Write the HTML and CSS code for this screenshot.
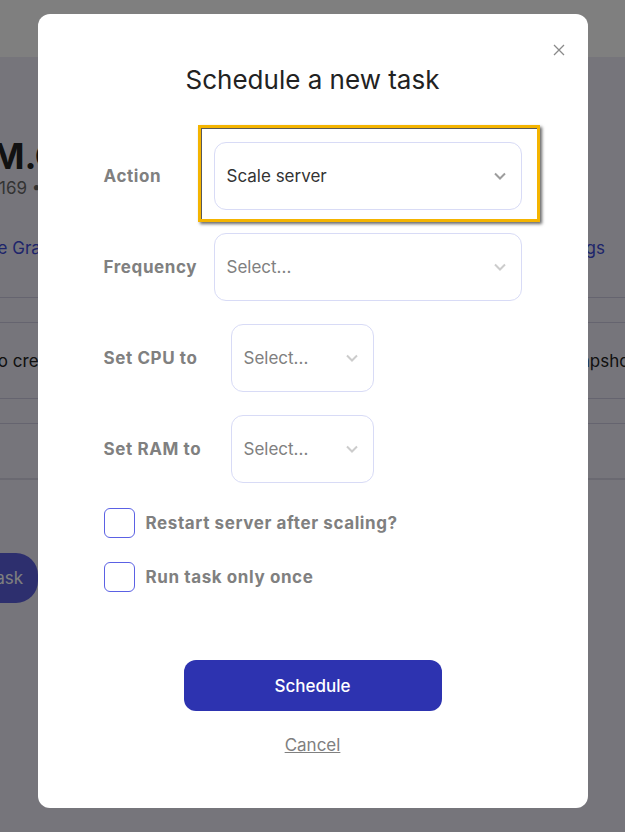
FILE: index.html
```html
<!DOCTYPE html>
<html lang="en">
<head>
    <meta charset="UTF-8">
    <meta name="viewport" content="width=device-width, initial-scale=1.0">
    <title>Schedule a new task</title>
    <link rel="stylesheet" href="styles.css">
</head>
<body>
    <div class="page">
        <header class="topbar"></header>
        <main class="server">
            <h1 class="server-name">VM.Cloud-01</h1>
            <p class="server-meta">192.168.0.169 • Ubuntu 22.04</p>
            <nav class="tabs">
                <a class="tab tab--first">Usage Graphs</a>
                <a class="tab">Settings</a>
            </nav>
            <div class="tasks">
                <div class="tasks-head"></div>
                <div class="tasks-row">
                    <span class="tasks-hint">Click to create a task</span>
                    <span class="tasks-type">Snapshot</span>
                </div>
                <div class="tasks-head"></div>
                <div class="tasks-empty"></div>
            </div>
            <button class="btn-new">New task</button>
        </main>
    </div>

    <div class="overlay">
        <div class="modal">
            <button class="modal-close" aria-label="Close">
                <svg width="12" height="12" viewBox="0 0 12 12">
                    <path d="M1 1 L11 11 M11 1 L1 11" stroke="#8a8a8a" stroke-width="1.3" fill="none"/>
                </svg>
            </button>
            <h2 class="modal-title">Schedule a new task</h2>

            <form class="task-form">
                <div class="field-row">
                    <label class="field-label">Action</label>
                    <div class="select select--filled">
                        <span>Scale server</span>
                        <svg class="chevron" width="12" height="8" viewBox="0 0 12 8">
                            <polyline points="1,1.5 6,6.5 11,1.5" fill="none" stroke="#9d9d9d" stroke-width="2"/>
                        </svg>
                        <div class="highlight"></div>
                    </div>
                </div>
                <div class="field-row">
                    <label class="field-label">Frequency</label>
                    <div class="select">
                        <span>Select...</span>
                        <svg class="chevron" width="12" height="8" viewBox="0 0 12 8">
                            <polyline points="1,1.5 6,6.5 11,1.5" fill="none" stroke="#cccccc" stroke-width="2"/>
                        </svg>
                    </div>
                </div>
                <div class="field-row">
                    <label class="field-label field-label--wide">Set CPU to</label>
                    <div class="select select--small">
                        <span>Select...</span>
                        <svg class="chevron" width="12" height="8" viewBox="0 0 12 8">
                            <polyline points="1,1.5 6,6.5 11,1.5" fill="none" stroke="#cccccc" stroke-width="2"/>
                        </svg>
                    </div>
                </div>
                <div class="field-row">
                    <label class="field-label field-label--wide">Set RAM to</label>
                    <div class="select select--small">
                        <span>Select...</span>
                        <svg class="chevron" width="12" height="8" viewBox="0 0 12 8">
                            <polyline points="1,1.5 6,6.5 11,1.5" fill="none" stroke="#cccccc" stroke-width="2"/>
                        </svg>
                    </div>
                </div>

                <div class="checks">
                    <label class="check"><span class="check-box"></span>Restart server after scaling?</label>
                    <label class="check"><span class="check-box"></span>Run task only once</label>
                </div>

                <button type="button" class="btn-schedule">Schedule</button>
                <a class="cancel">Cancel</a>
            </form>
        </div>
    </div>
</body>
</html>
```

FILE: styles.css
```css
html {
    background-color: #edebf7;
}
body {
    margin: 0;
    font-family: Inter, 'Noto Sans', sans-serif;
    color: #222;
    overflow: hidden;
}

/* page behind the dialog */
.topbar {
    height: 57px;
    background-color: #fff;
}
.server {
    padding-top: 79px;
}
.server-name {
    margin: 0 0 0 -36px;
    font-size: 36px;
    line-height: 40px;
    font-weight: 700;
    white-space: nowrap;
}
.server-meta {
    margin: 0 0 0 -78px;
    font-size: 17px;
    line-height: 24px;
    color: #666;
    white-space: nowrap;
}
.tabs {
    display: flex;
    justify-content: space-between;
    margin: 36px 20px 0 -44px;
    font-size: 17px;
    line-height: 24px;
    color: #3d4ad6;
}
.tasks {
    margin-top: 37px;
}
.tasks-head {
    height: 24px;
    border-top: 1px solid #cbc8de;
    border-bottom: 1px solid #cbc8de;
}
.tasks-row {
    display: flex;
    justify-content: space-between;
    align-items: center;
    height: 75px;
    margin: 0 -10px 0 -52px;
    font-size: 17px;
}
.tasks-empty {
    height: 54px;
    border-bottom: 2px solid #d5d3e2;
}
.btn-new {
    display: block;
    width: 120px;
    height: 50px;
    margin: 73px 0 0 -82px;
    padding: 0 15px 0 0;
    text-align: right;
    font-family: inherit;
    font-size: 17px;
    color: #fff;
    background-color: #5a5fdc;
    border: none;
    border-radius: 22px;
}

/* dialog */
.overlay {
    position: fixed;
    inset: 0;
    display: flex;
    justify-content: center;
    align-items: flex-start;
    padding-top: 14px;
    background-color: rgba(0, 0, 0, 0.5);
}
.modal {
    position: relative;
    box-sizing: border-box;
    width: 550px;
    height: 794px;
    padding: 50px 66px 0;
    background-color: #fff;
    border-radius: 12px;
}
.modal-close {
    position: absolute;
    top: 30px;
    right: 23px;
    width: 12px;
    height: 12px;
    padding: 0;
    border: none;
    background: none;
    display: flex;
}
.modal-title {
    margin: 0;
    text-align: center;
    font-size: 26px;
    line-height: 32px;
    font-weight: 400;
    color: #222;
}
.task-form {
    display: flex;
    flex-direction: column;
    margin-top: 46px;
}
.field-row {
    display: flex;
    align-items: center;
    margin-bottom: 23px;
}
.field-row:nth-child(4) {
    margin-bottom: 0;
}
.field-label {
    width: 110px;
    flex: none;
    font-size: 17px;
    font-weight: 700;
    letter-spacing: 0.6px;
    color: #808080;
}
.field-label--wide {
    width: 127px;
}
.select {
    position: relative;
    flex: 1;
    box-sizing: border-box;
    height: 68px;
    display: flex;
    align-items: center;
    justify-content: space-between;
    padding: 0 15px 0 12px;
    font-size: 17px;
    color: #808080;
    border: 1px solid #d8dbf6;
    border-radius: 12px;
}
.select--filled {
    color: #333;
}
.select--small {
    flex: none;
    width: 143px;
}
.chevron {
    flex: none;
}
.highlight {
    position: absolute;
    top: -18px;
    left: -17px;
    right: -19px;
    bottom: -13px;
    border: 3px solid #f4b400;
    box-shadow: 2px 2px 3px rgba(0, 0, 0, 0.6), inset 1px 1px 0 rgba(0, 0, 0, 0.65);
    pointer-events: none;
}
.checks {
    display: flex;
    flex-direction: column;
    gap: 24px;
    margin-top: 25px;
}
.check {
    display: flex;
    align-items: center;
    gap: 11px;
    font-size: 17px;
    font-weight: 700;
    letter-spacing: 0.6px;
    color: #808080;
}
.check-box {
    box-sizing: border-box;
    width: 31px;
    height: 30px;
    border: 1px solid #5b61e4;
    border-radius: 6px;
}
.btn-schedule {
    align-self: center;
    width: 258px;
    height: 51px;
    margin-top: 68px;
    font-family: inherit;
    font-size: 17px;
    font-weight: 500;
    color: #fff;
    background-color: #2d33b0;
    border: none;
    border-radius: 12px;
}
.cancel {
    align-self: center;
    margin-top: 24px;
    font-size: 17px;
    line-height: 20px;
    color: #808080;
    text-decoration: underline;
}
```
